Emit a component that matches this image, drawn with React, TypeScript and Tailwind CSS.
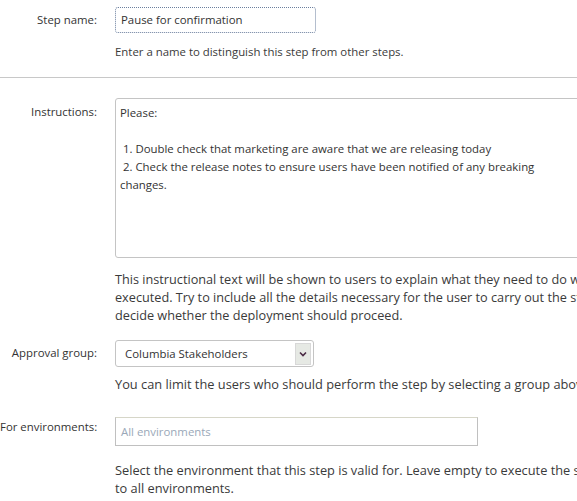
import React from "react"

const font = { fontFamily: '"Open Sans", "Noto Sans", sans-serif' }

function Label({ children, className = "" }: { children: React.ReactNode; className?: string }) {
  return <div className={`w-[97px] shrink-0 text-right whitespace-nowrap ${className}`}>{children}</div>
}

function Help({ lines, className = "" }: { lines: string[]; className?: string }) {
  return (
    <div className={`leading-[18px] text-[#3a3a3a] ${className}`}>
      {lines.map((l, i) => (
        <div key={i} className="whitespace-nowrap">{l}</div>
      ))}
    </div>
  )
}

export default function App() {
  return (
    <div className="w-[577px] h-[501px] overflow-hidden bg-white text-[11.4px] text-[#333]" style={font}>
      <div className="w-[760px]">
        {/* Step name */}
        <div className="flex gap-[18px] pt-[7px]">
          <Label className="pt-[4px] leading-[18px]">Step name:</Label>
          <div>
            <div className="w-[201px] h-[26px] rounded-[3px] border border-dotted border-[#6b7f9e] px-[5px] leading-[24px]">
              Pause for confirmation
            </div>
            <Help className="mt-[10px]" lines={["Enter a name to distinguish this step from other steps."]} />
          </div>
        </div>

        <div className="mt-[16px] h-px bg-[#c8c8c8]" />

        {/* Instructions */}
        <div className="flex gap-[18px] pt-[20px]">
          <Label className="pt-[5px] leading-[18px]">Instructions:</Label>
          <div>
            <div className="w-[560px] h-[160px] rounded-[3px] border border-[#c4c4c4] px-[4px] pt-[5px] leading-[18px]">
              <div>Please:</div>
              <div>&nbsp;</div>
              <div className="whitespace-pre"> 1. Double check that marketing are aware that we are releasing today</div>
              <div className="whitespace-pre"> 2. Check the release notes to ensure users have been notified of any breaking</div>
              <div>changes.</div>
            </div>
            <Help
              className="mt-[12px] text-[12.7px]"
              lines={[
                "This instructional text will be shown to users to explain what they need to do when the step is",
                "executed. Try to include all the details necessary for the user to carry out the step and",
                "decide whether the deployment should proceed.",
              ]}
            />
          </div>
        </div>

        {/* Approval group */}
        <div className="flex gap-[18px] pt-[16px]">
          <Label className="pt-[4px] leading-[18px]">Approval group:</Label>
          <div>
            <div className="flex w-[199px] h-[27px] items-center justify-between rounded-[3px] border border-[#c4c4c4] pl-[9px] pr-[2px]">
              <span>Columbia Stakeholders</span>
              <div className="flex h-[22px] w-[16px] items-center justify-center border border-[#d8d8d8] bg-[#e6e9e4]">
                <svg width="8" height="6" viewBox="0 0 8 6">
                  <path d="M1 1.5 L4 4.5 L7 1.5" fill="none" stroke="#4a2a44" strokeWidth="1.6" />
                </svg>
              </div>
            </div>
            <Help className="mt-[8px] text-[12.8px]" lines={["You can limit the users who should perform the step by selecting a group above."]} />
          </div>
        </div>

        {/* For environments */}
        <div className="flex gap-[18px] pt-[24px]">
          <Label className="pt-[1px] leading-[18px]">For environments:</Label>
          <div>
            <div className="w-[363px] h-[29px] border border-[#c0c0c0] border-t-[#d6d6c8] px-[5px] leading-[27px] text-[#9aa8b8]">
              All environments
            </div>
            <Help
              className="mt-[15px] text-[12.8px]"
              lines={[
                "Select the environment that this step is valid for. Leave empty to execute the step",
                "to all environments.",
              ]}
            />
          </div>
        </div>
      </div>
    </div>
  )
}
